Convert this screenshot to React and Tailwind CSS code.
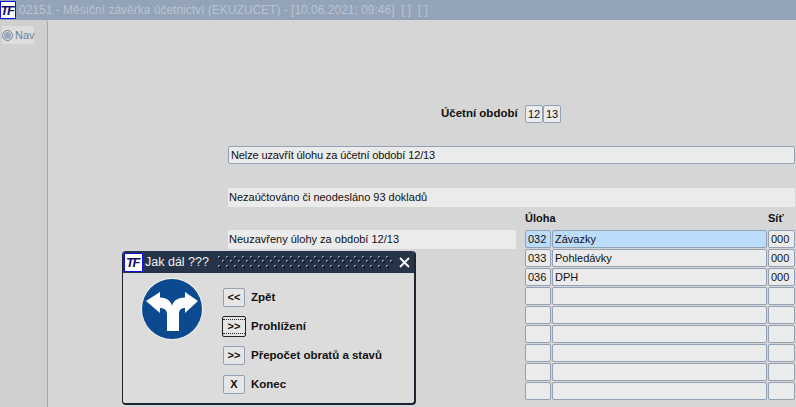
import React from "react";

const rows = [
  { code: "032", name: "Závazky", net: "000", active: true },
  { code: "033", name: "Pohledávky", net: "000" },
  { code: "036", name: "DPH", net: "000" },
  { code: "", name: "", net: "" },
  { code: "", name: "", net: "" },
  { code: "", name: "", net: "" },
  { code: "", name: "", net: "" },
  { code: "", name: "", net: "" },
  { code: "", name: "", net: "" },
];

const actions = [
  { key: "<<", label: "Zpět" },
  { key: ">>", label: "Prohlížení", focused: true },
  { key: ">>", label: "Přepočet obratů a stavů" },
  { key: "X", label: "Konec" },
];

function Logo({ className }) {
  return (
    <div className={`flex items-center justify-center bg-white border border-[#1010e0] font-['Liberation_Sans',sans-serif] font-bold italic text-[#10106a] text-[13px] leading-none tracking-[-1.5px] ${className}`}>
      <span className="pr-[2px]">TF</span>
    </div>
  );
}

function Cell({ children, active, className }) {
  return (
    <div className={`h-[18px] flex items-center px-[2px] rounded-[2px] border border-[#93a1b5] text-[11px] leading-none text-[#111] ${active ? "bg-[#bbdcfb]" : "bg-[#ebebeb]"} ${className}`}>
      {children}
    </div>
  );
}

function DirectionSign() {
  return (
    <svg width="62" height="62" viewBox="0 0 62 62">
      <circle cx="31" cy="31" r="31" fill="#f1f1f1" />
      <circle cx="31" cy="31" r="30" fill="#0b4a8f" />
      <path
        d="M5 23 L19 14 L19 19.5 C26 20 30 23 31 28 C32 23 36 20 44 19.5 L44 14 L57 23 L44 35 L44 30 C40 30 38 32 38 36 L38 53 L26 53 L26 36 C26 32 23 30 19 30 L19 35 Z"
        fill="#ffffff"
      />
    </svg>
  );
}

export default function App() {
  return (
    <div className="w-[796px] h-[407px] overflow-hidden relative bg-[#d6d6d6] font-['Liberation_Sans',sans-serif]">
      {/* title bar */}
      <div className="h-[20px] flex items-center bg-[#93a3b8]">
        <Logo className="w-[16px] h-[18px]" />
        <span className="ml-[3px] text-[12px] leading-none text-[#b9c4d2] whitespace-pre">
          02151 - Měsíční závěrka účetnictví (EKUZUCET) - [10.06.2021; 09:46]  [ ]  [ ]
        </span>
      </div>

      <div className="flex h-[387px]">
        {/* nav */}
        <div className="w-[48px] border-r border-[#9aa8bb] rounded-tr-[3px] bg-[#d0d0d0] pt-[6px] pl-[2px]">
          <div className="w-[32px] h-[18px] flex items-center gap-[2px] bg-[#dedede] text-[11px] text-[#6d7f99]">
            <span className="w-[11px] h-[11px] rounded-full border border-[#6f7f95] flex items-center justify-center shrink-0">
              <span className="w-[7px] h-[7px] rounded-full bg-[#9aa8bb]" />
            </span>
            Nav
          </div>
        </div>

        {/* form */}
        <div className="flex-1 pl-[180px] pr-[1px] pt-[85px]">
          <div className="flex items-center h-[18px]">
            <span className="ml-[213px] w-[84px] text-[11.5px] font-bold text-[#111] whitespace-nowrap">Účetní období</span>
            <Cell className="w-[18px] justify-center">12</Cell>
            <Cell className="w-[18px] justify-center">13</Cell>
          </div>

          <Cell className="mt-[23px] w-[567px] tracking-[-0.12px]">Nelze uzavřít úlohu za účetní období 12/13</Cell>

          <div className="mt-[24px] h-[19px] flex items-center pl-[1px] bg-[#ebebeb] text-[11px] text-[#111]">
            Nezaúčtováno či neodesláno 93 dokladů
          </div>

          <div className="h-[23px] flex items-center pl-[297px] text-[11px] font-bold text-[#111]">
            <span className="w-[243px]">Úloha</span>
            <span>Síť</span>
          </div>

          <div className="flex">
            <div className="w-[288px] h-[19px] flex items-center pl-[1px] bg-[#ebebeb] text-[11px] text-[#111]">
              Neuzavřeny úlohy za období 12/13
            </div>
            <div className="ml-[9px] flex flex-col gap-px">
              {rows.map((row, i) => (
                <div key={i} className="flex gap-px">
                  <Cell active={row.active} className="w-[26px]">{row.code}</Cell>
                  <Cell active={row.active} className="w-[215px]">{row.name}</Cell>
                  <Cell className="w-[27px]">{row.net}</Cell>
                </div>
              ))}
            </div>
          </div>
        </div>
      </div>

      {/* dialog */}
      <div className="absolute left-[122px] top-[251px] w-[294px] h-[154px] bg-[#dcdcdc] rounded-[4px] border-r-2 border-b-2 border-l border-[#1c2430] overflow-hidden">
        <div className="h-[22px] flex items-center bg-[#263449] text-white">
          <Logo className="w-[19px] h-[19px] ml-px" />
          <span className="ml-[2px] text-[12.5px] leading-none text-[#f2f2f2]">Jak dál ???</span>
          <svg className="ml-[9px] flex-1" height="14">
            <defs>
              <pattern id="dots" width="8" height="9" patternUnits="userSpaceOnUse">
                <rect x="0" y="1" width="2" height="2" fill="#8f9bab" />
                <rect x="1" y="2" width="2" height="2" fill="#0c1420" />
                <rect x="1" y="1" width="1" height="1" fill="#8f9bab" />
                <rect x="4" y="5" width="2" height="2" fill="#8f9bab" />
                <rect x="5" y="6" width="2" height="2" fill="#0c1420" />
                <rect x="5" y="5" width="1" height="1" fill="#8f9bab" />
              </pattern>
            </defs>
            <rect width="100%" height="14" fill="url(#dots)" />
          </svg>
          <svg className="ml-[5px] mr-[4px] shrink-0" width="11" height="11" viewBox="0 0 11 11">
            <path d="M1 1 L10 10 M10 1 L1 10" stroke="#fff" strokeWidth="1.8" />
          </svg>
        </div>

        <div className="flex">
          <div className="ml-[18px] mt-[5px] w-[62px] h-[62px] shrink-0">
            <DirectionSign />
          </div>
          <div className="ml-[20px] flex flex-col gap-[10px] pt-[15px]">
            {actions.map((a) => (
              <div key={a.label} className="flex items-center gap-[6px]">
                <div className={`relative flex items-center justify-center rounded-[2px] bg-[#e6e6e6] text-[11px] font-bold text-[#111] leading-none ${a.focused ? "w-[24px] h-[21px] -mx-px -my-px border border-[#222]" : "w-[22px] h-[19px] border border-[#93a1b5]"}`}>
                  {a.focused && <span className="absolute inset-x-0 top-[2px] bottom-[2px] border-y border-dotted border-[#222]" />}
                  {a.key}
                </div>
                <span className="text-[11.5px] font-bold text-[#111] whitespace-nowrap">{a.label}</span>
              </div>
            ))}
          </div>
        </div>
      </div>
    </div>
  );
}
